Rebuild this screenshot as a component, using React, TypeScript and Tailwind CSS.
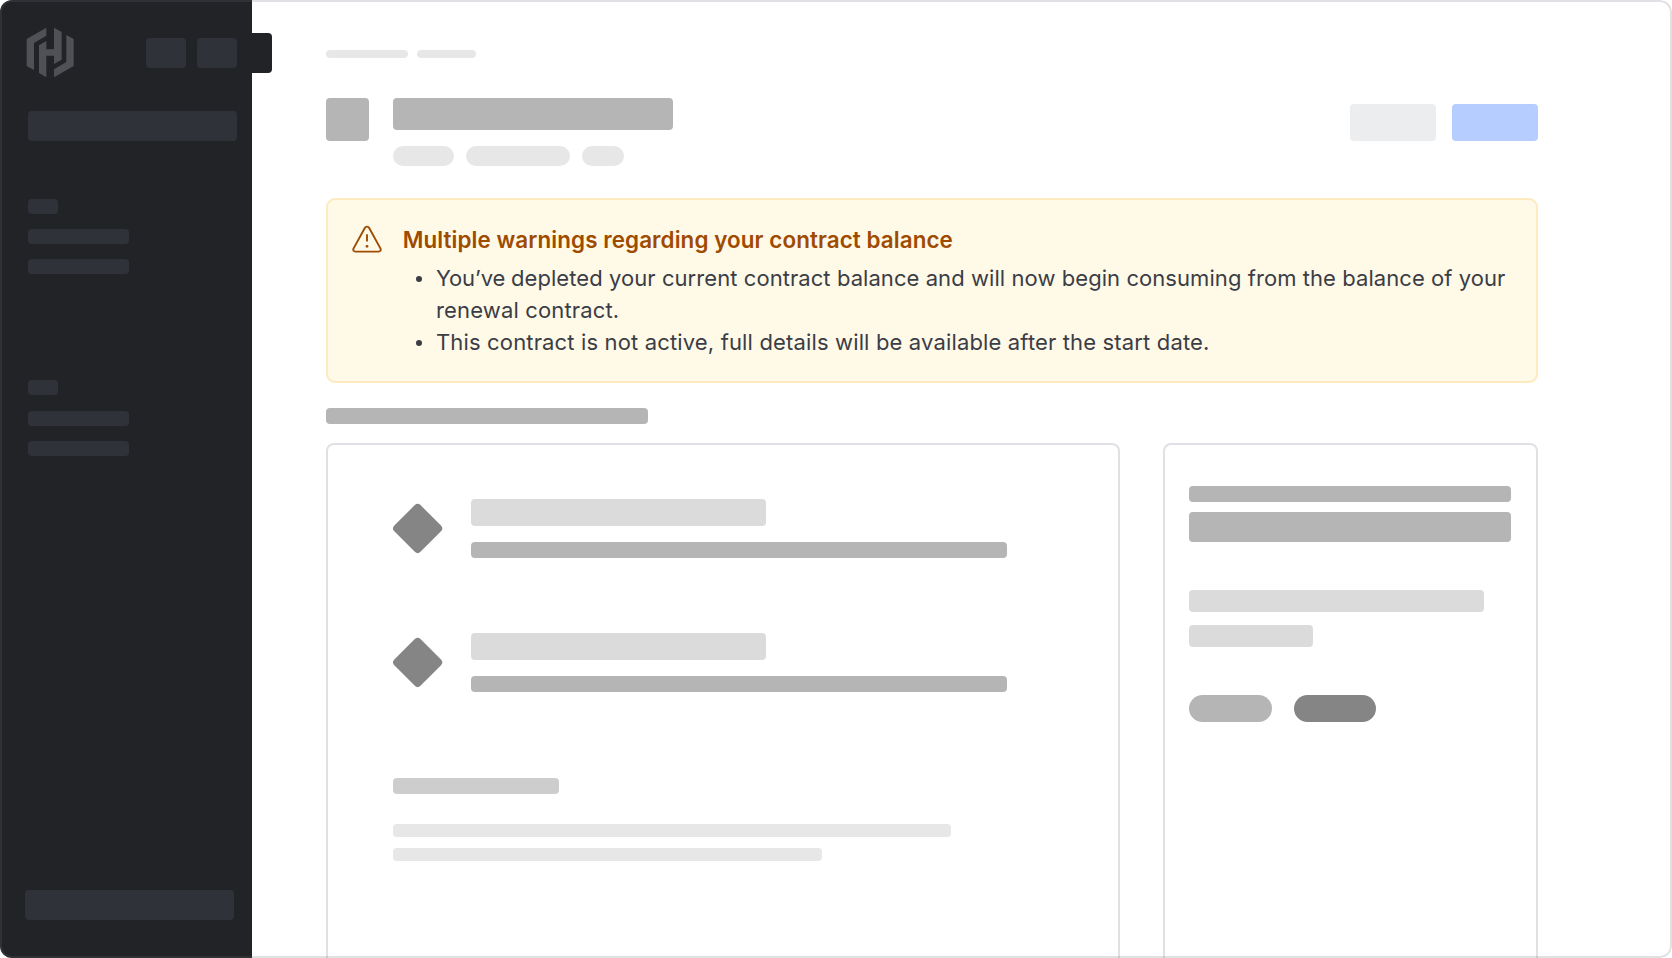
import React from "react";

function Block({ className }: { className: string }) {
  return <div className={`shrink-0 ${className}`} />;
}

function Logo() {
  return (
    <svg className="h-[51px] w-[48.67px] fill-[#505156]" viewBox="78 82 146 153" aria-hidden="true">
      <path d="M80 118 139 84V108L102 130V211L80 199Z" />
      <path d="M117 137 139 124V149H162V84L185 97V180L162 193V168H139V233L117 220Z" />
      <path d="M199 106 221 118V199L162 233V209L199 187Z" />
    </svg>
  );
}

function NavGroup() {
  return (
    <div className="flex flex-col gap-[15.2px]">
      <Block className="h-[15px] w-[30px] rounded-[4px] bg-[#2f3239]" />
      <Block className="h-[15px] w-[101px] rounded-[4px] bg-[#2f3239]" />
      <Block className="h-[15px] w-[101px] rounded-[4px] bg-[#2f3239]" />
    </div>
  );
}

function Sidebar() {
  return (
    <aside className="relative flex h-full w-[252px] shrink-0 flex-col bg-[#222327]">
      <div className="flex h-[111px] items-start pl-[26px] pt-[27.3px]">
        <Logo />
        <div className="ml-[71.3px] mt-[10.7px] flex gap-[10.3px]">
          <Block className="h-[30px] w-[40.3px] rounded-[4px] bg-[#2f3239]" />
          <Block className="h-[30px] w-[40.3px] rounded-[4px] bg-[#2f3239]" />
        </div>
      </div>
      <Block className="ml-7 h-[30px] w-[209px] rounded-[4px] bg-[#2f3239]" />
      <div className="ml-7 mt-[58px] flex flex-col gap-[106px]">
        <NavGroup />
        <NavGroup />
      </div>
      <Block className="mb-[38px] ml-[25px] mt-auto h-[30px] w-[209.3px] rounded-[4px] bg-[#2f3239]" />
      <div className="absolute left-full top-[32.5px] h-[40.3px] w-[20.2px] rounded-r-[4px] bg-[#222327]" />
    </aside>
  );
}

function WarningIcon() {
  return (
    <svg
      className="mt-[25px] h-[30px] w-[30px] shrink-0"
      viewBox="0 0 30 30"
      fill="none"
      stroke="#9e4b00"
      strokeWidth="1.9"
      strokeLinecap="round"
      strokeLinejoin="round"
      aria-hidden="true"
    >
      <path d="M12.8 3 1.6 23.4C.8 25 1.6 26.6 3.4 26.6H26.6C28.4 26.6 29.2 25 28.4 23.4L17.2 3C16.2 1.2 13.8 1.2 12.8 3Z" />
      <path d="M15 10V15.7" />
      <circle cx="15" cy="21.3" r="1.4" fill="#9e4b00" stroke="none" />
    </svg>
  );
}

function Bullet({ children }: { children: React.ReactNode }) {
  return (
    <li className="flex whitespace-nowrap">
      <span className="mr-[14px] mt-[14px] h-[5.5px] w-[5.5px] shrink-0 rounded-full bg-[#3b3d45]" />
      <span>{children}</span>
    </li>
  );
}

function Alert() {
  return (
    <div className="mt-8 flex h-[185px] w-[1212px] rounded-[9px] border-2 border-[#fdeabf] bg-[#fff9e8] pl-[24.3px]">
      <WarningIcon />
      <div className="ml-[20.4px] pt-[24px]">
        <h2 className="whitespace-nowrap text-[22.4px] font-semibold leading-8 tracking-[0.09px] text-[#9e4b00]">
          Multiple warnings regarding your contract balance
        </h2>
        <ul className="ml-[13.8px] mt-[6px] text-[22px] leading-8 tracking-[0.15px] text-[#3b3d45]">
          <Bullet>
            <span className="tracking-[-0.25px]">You’ve </span>
            <span className="tracking-[0.065px]">
              depleted your current contract balance and will now begin consuming from the balance of your
            </span>
            <br />
            renewal contract.
          </Bullet>
          <Bullet>This contract is not active, full details will be available after the start date.</Bullet>
        </ul>
      </div>
    </div>
  );
}

function ListItem() {
  return (
    <div className="flex items-start">
      <div className="ml-[5.5px] mt-[10.5px] h-[37.3px] w-[37.3px] shrink-0 rotate-45 rounded-[4px] bg-[#858585]" />
      <div className="ml-[35.2px] flex flex-col gap-4">
        <Block className="h-[27px] w-[295px] rounded-[4px] bg-[#dbdbdb]" />
        <Block className="h-4 w-[536px] rounded-[4px] bg-[#b5b5b5]" />
      </div>
    </div>
  );
}

export default function App() {
  return (
    <div className="relative flex h-[958px] w-[1672px] overflow-hidden rounded-[12px] bg-white font-['Inter','Liberation_Sans',sans-serif]">
      <Sidebar />
      <main className="flex h-full flex-1 flex-col pl-[74px] pt-[50px]">
        <div className="flex gap-[8.7px]">
          <Block className="h-2 w-[82.3px] rounded-[4px] bg-[#e7e7e7]" />
          <Block className="h-2 w-[59.2px] rounded-[4px] bg-[#e7e7e7]" />
        </div>

        <header className="mt-10 flex h-[68px] w-[1212px] items-start">
          <Block className="h-[43px] w-[43px] rounded-[4px] bg-[#b5b5b5]" />
          <div className="ml-6 flex flex-col gap-4">
            <Block className="h-8 w-[280px] rounded-[4px] bg-[#b5b5b5]" />
            <div className="flex gap-[11.9px]">
              <Block className="h-5 w-[61.4px] rounded-full bg-[#e7e7e7]" />
              <Block className="h-5 w-[104px] rounded-full bg-[#e7e7e7]" />
              <Block className="h-5 w-[41.7px] rounded-full bg-[#e7e7e7]" />
            </div>
          </div>
          <div className="ml-auto mt-[5.5px] flex gap-4">
            <Block className="h-[37.4px] w-[86px] rounded-[4px] bg-[#ebedef]" />
            <Block className="h-[37.4px] w-[86px] rounded-[4px] bg-[#b5cdff]" />
          </div>
        </header>

        <Alert />

        <Block className="mt-[25px] h-4 w-[322px] rounded-[4px] bg-[#b5b5b5]" />

        <div className="mt-[19px] flex h-[515px] gap-[43px]">
          <section className="w-[794px] rounded-t-[8px] border-2 border-b-0 border-[#e0e1e4] pl-[65px] pt-[54px]">
            <div className="flex flex-col gap-[75px]">
              <ListItem />
              <ListItem />
            </div>
            <Block className="mt-[86px] h-4 w-[166px] rounded-[4px] bg-[#cdcdcd]" />
            <Block className="mt-[29.5px] h-[13.5px] w-[558px] rounded-[4px] bg-[#e7e7e7]" />
            <Block className="mt-[11px] h-[13.2px] w-[429px] rounded-[4px] bg-[#e7e7e7]" />
          </section>
          <section className="w-[375px] rounded-t-[8px] border-2 border-b-0 border-[#e0e1e4] pl-[24.2px] pt-[40.5px]">
            <Block className="h-[16.5px] w-[322px] rounded-[4px] bg-[#b5b5b5]" />
            <Block className="mt-[10.3px] h-[29.7px] w-[322px] rounded-[4px] bg-[#b5b5b5]" />
            <Block className="mt-[48.2px] h-[21.6px] w-[295.3px] rounded-[4px] bg-[#dbdbdb]" />
            <Block className="mt-[13.3px] h-[21.6px] w-[123.5px] rounded-[4px] bg-[#dbdbdb]" />
            <div className="mt-[48px] flex gap-[22.3px]">
              <Block className="h-[27px] w-[82.5px] rounded-full bg-[#b5b5b5]" />
              <Block className="h-[27px] w-[82.3px] rounded-full bg-[#858585]" />
            </div>
          </section>
        </div>
      </main>
      <div className="pointer-events-none absolute inset-0 rounded-[12px] border-2 border-[#656a76]/20" />
    </div>
  );
}
